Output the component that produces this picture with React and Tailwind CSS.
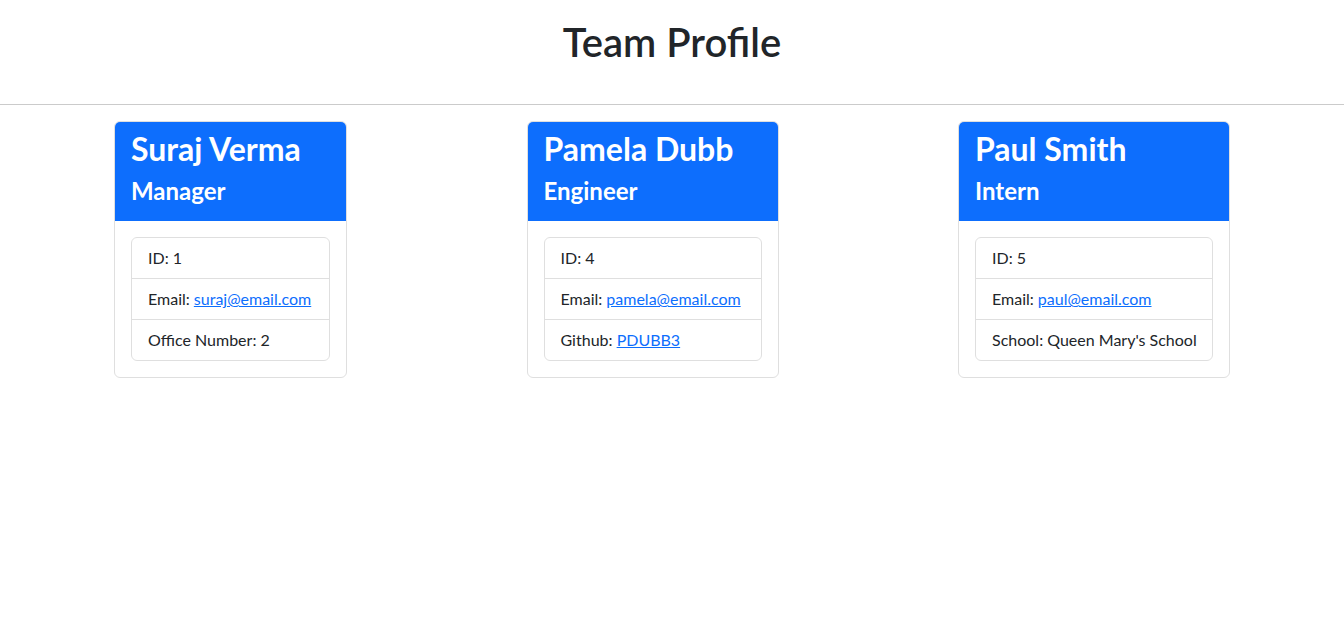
import React from 'react';

const team = [
  {
    name: 'Suraj Verma',
    role: 'Manager',
    width: 'w-[233px]',
    id: 1,
    email: 'suraj@email.com',
    extra: { label: 'Office Number', value: '2' },
  },
  {
    name: 'Pamela Dubb',
    role: 'Engineer',
    width: 'w-[252px]',
    id: 4,
    email: 'pamela@email.com',
    extra: { label: 'Github', value: 'PDUBB3', link: true },
  },
  {
    name: 'Paul Smith',
    role: 'Intern',
    width: 'w-[272px]',
    id: 5,
    email: 'paul@email.com',
    extra: { label: 'School', value: "Queen Mary's School" },
  },
];

const EmployeeCard = ({ person }) => {
  return (
    <div className={`${person.width} border border-[#dfdfdf] rounded-[6px] overflow-hidden bg-white`}>
      {/* header */}
      <div className="bg-[#0d6efd] text-white px-4 py-2">
        <h2 className="text-[32px] leading-[38px] font-bold mb-2 whitespace-nowrap">{person.name}</h2>
        <h4 className="text-[24px] leading-[29px] font-bold mb-2">{person.role}</h4>
      </div>
      <div className="p-4">
        <ul className="border border-[#dfdfdf] rounded-[6px]">
          <li className="px-4 py-2 leading-6 border-b border-[#dfdfdf]">ID: {person.id}</li>
          <li className="px-4 py-2 leading-6 border-b border-[#dfdfdf] whitespace-nowrap">
            Email: <a href="#" className="text-[#0d6efd] underline">{person.email}</a>
          </li>
          <li className="px-4 py-2 leading-6 whitespace-nowrap">
            {person.extra.label}:{' '}
            {person.extra.link ? (
              <a href="#" className="text-[#0d6efd] underline">{person.extra.value}</a>
            ) : (
              person.extra.value
            )}
          </li>
        </ul>
      </div>
    </div>
  );
};

const App = () => {
  return (
    <div className="min-h-screen bg-white text-[#212529] text-base" style={{ fontFamily: 'Lato, "Noto Sans", sans-serif' }}>
      <header className="h-[105px] border-b border-[#cbcbcb] flex justify-center pt-[18px]">
        <h1 className="text-[40px] leading-[48px] font-semibold">Team Profile</h1>
      </header>
      <main className="w-[1140px] mx-auto px-3 pt-[16px] flex justify-between items-start">
        {team.map((p) => (
          <EmployeeCard key={p.id} person={p} />
        ))}
      </main>
    </div>
  );
};

export default App;
